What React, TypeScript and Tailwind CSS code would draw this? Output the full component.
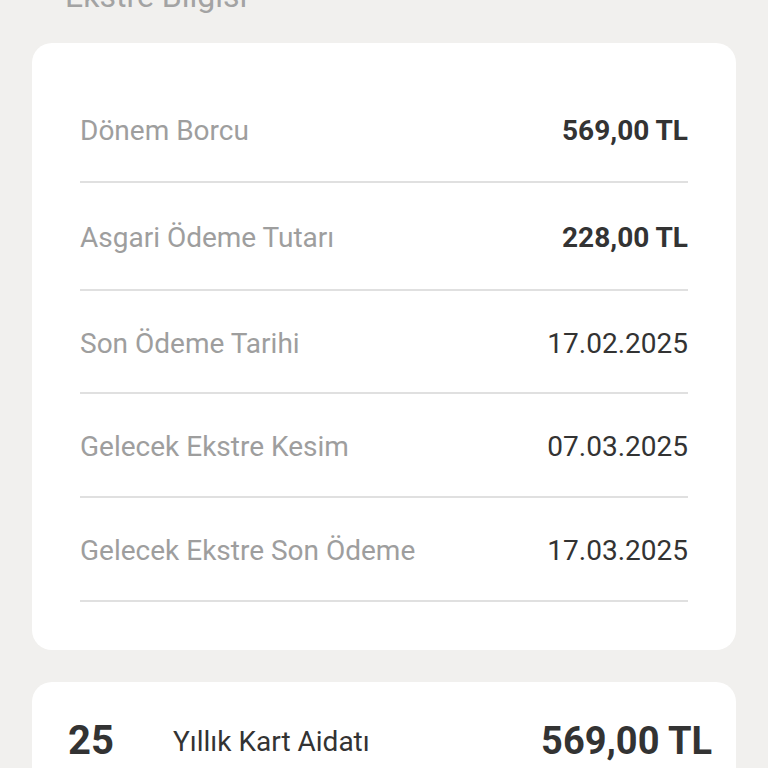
import React from "react";

type Row = { label: string; value: string; bold?: boolean; h: string };

const rows: Row[] = [
  { label: "Dönem Borcu", value: "569,00 TL", bold: true, h: "h-[106px]" },
  { label: "Asgari Ödeme Tutarı", value: "228,00 TL", bold: true, h: "h-[108px]" },
  { label: "Son Ödeme Tarihi", value: "17.02.2025", h: "h-[103px]" },
  { label: "Gelecek Ekstre Kesim", value: "07.03.2025", h: "h-[104px]" },
  { label: "Gelecek Ekstre Son Ödeme", value: "17.03.2025", h: "h-[104px]" },
];

const InfoRow = ({ label, value, bold, h }: Readonly<Row>) => (
  <div className={`flex ${h} items-center justify-between border-b-2 border-[#e0e0e0] pt-[4px]`}>
    <span className="text-[28px] text-[#9e9e9e]">{label}</span>
    <span className={bold ? "text-[28px] font-bold text-[#333333]" : "text-[28px] text-[#333333]"}>
      {value}
    </span>
  </div>
);

export default function App() {
  return (
    <div className="h-[768px] w-[768px] overflow-hidden bg-[#f1f0ee] px-8 font-['Roboto',_'Liberation_Sans',_sans-serif]">
      <div className="-mt-[18px] h-[28px] pl-[33px] text-[32px] leading-[28px] text-[#a3a3a3]">Ekstre Bilgisi</div>
      <div className="mt-[33px] rounded-[20px] bg-white px-12 pt-[34px] pb-[48px]">
        {rows.map((r) => (
          <InfoRow key={r.label} {...r} />
        ))}
      </div>
      <div className="mt-8 flex h-[120px] items-start rounded-[20px] bg-white pt-[37px] pl-9 pr-6">
        <span className="w-[105px] text-[40px] leading-[44px] font-bold text-[#333333]">25</span>
        <span className="flex-1 pt-[3px] text-[28px] leading-[40px] text-[#333333]">Yıllık Kart Aidatı</span>
        <span className="text-[38px] leading-[44px] font-bold text-[#333333]">569,00 TL</span>
      </div>
    </div>
  );
}
